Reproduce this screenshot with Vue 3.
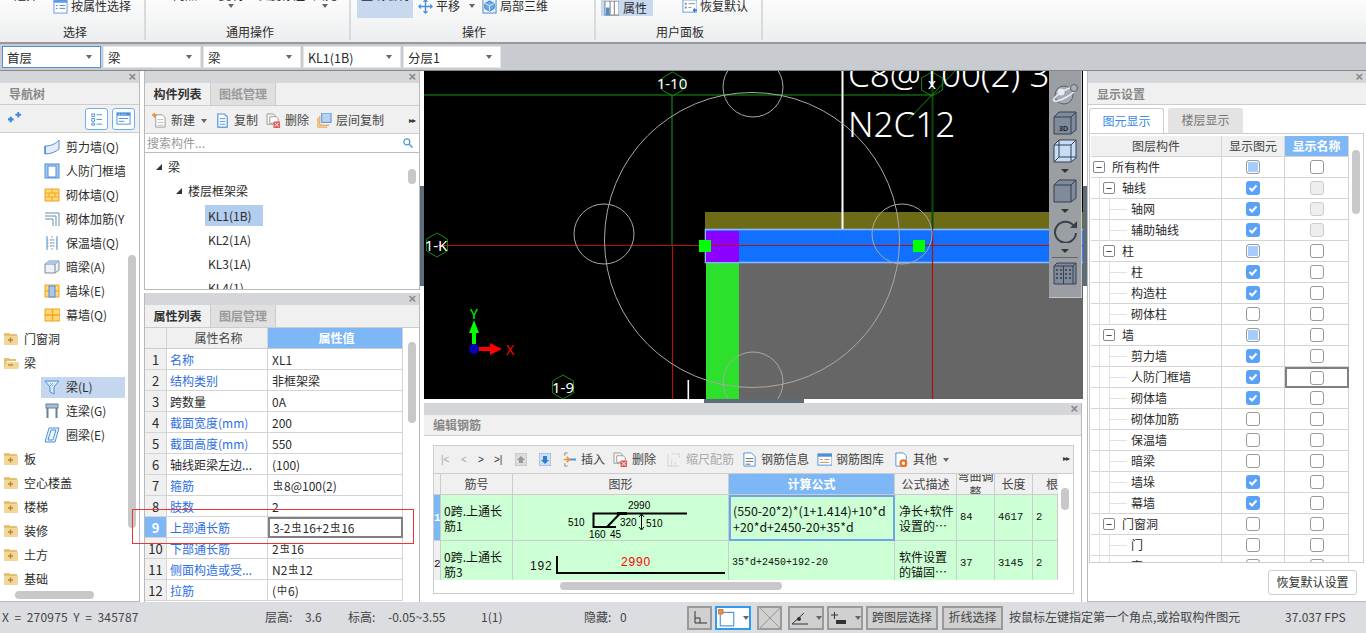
<script setup>
const ic = {
  attr: '<rect x="1" y="1" width="14" height="14" fill="#fff" stroke="#5b9bea"/><rect x="1" y="0" width="14" height="4" fill="#5b9bea"/><path d="M3 7h2M3 10h2M7 7h6M7 10h6" stroke="#5b80aa"/>',
  pan: '<path d="M8 1v14M1 8h14" stroke="#4a90d9" stroke-width="1.5"/><path d="M8 0l3 3H5zM8 16l3-3H5zM0 8l3-3v6zM16 8l-3-3v6z" fill="#4a90d9"/>',
  local: '<rect x="1" y="0" width="14" height="15" fill="#e6effa" stroke="#4a86c8"/><path d="M8 2l5 3v5l-5 3-5-3V5z" fill="#6aa7e8" stroke="#3d78b8"/><path d="M8 7v6M3 5l5 2 5-2" stroke="#d6e6f8" fill="none"/>',
  prop: '<rect x="1" y="0" width="15" height="15" fill="#fff" stroke="#777"/><rect x="2" y="7" width="4" height="8" fill="#4a90d9"/><path d="M6.5 0v15M11 0v15" stroke="#777"/>',
  reset: '<rect x="1" y="1" width="15" height="13" fill="#fff" stroke="#5b9bea"/><path d="M3 5h2M3 9h2" stroke="#888" stroke-width="2"/><path d="M7 5h7M7 9h3" stroke="#888"/><path d="M16 12h-4M12 12l2-2M12 12l2 2" stroke="#2a7ad8" fill="none" stroke-width="1.4"/>',
  stars: '<path d="M1 9h6M4 6v6" stroke="#3f86d8" stroke-width="2.4"/><path d="M9 4h6M12 1v6" stroke="#3f86d8" stroke-width="2"/>',
  listv: '<path d="M3 3h3v3H3zM3 8h3v3H3zM3 13h3v2H3z" fill="none" stroke="#4a90d9"/><path d="M8 4h6M8 9h6M8 14h6" stroke="#4a90d9"/>',
  win: '<rect x="1" y="2" width="14" height="12" fill="#fff" stroke="#4a90d9"/><rect x="1" y="2" width="14" height="3" fill="#4a90d9"/><path d="M3 8h10M3 11h6" stroke="#4a90d9"/><path d="M3 3.5h1M6 3.5h1M9 3.5h1" stroke="#fff"/>',
  shear: '<path d="M1 7C6 7 12 5 15 1v9c-3 3-9 5-14 5z" fill="#e6ecf5" stroke="#4a90d9"/><path d="M1 7v8" stroke="#4a90d9" stroke-width="1.5"/>',
  rf: '<rect x="1" y="1" width="14" height="14" fill="#a9c8ee" stroke="#4a90d9"/><rect x="4" y="3" width="8" height="11" fill="#fff" stroke="#4a90d9"/>',
  brick: '<rect x="1" y="2" width="14" height="12" fill="#ffd873" stroke="#f0a428"/><path d="M1 6h14M1 10h14M8 2v4M5 6v4M11 6v4M8 10v4" stroke="#f0a428"/>',
  mesh: '<path d="M1 2h14v13M1 5h11v10M1 8h8v7" fill="none" stroke="#6d8db0"/>',
  insul: '<path d="M3 1v14M13 1v14" stroke="#4a90d9"/><path d="M8 1v14M3 5h10M3 8h10M3 11h10" stroke="#6d8db0" stroke-dasharray="1.5 1.5"/>',
  dark: '<path d="M1 5l4-3h10v9l-4 3H1z" fill="#eef2f7" stroke="#7a8a9c"/><path d="M1 5h10v9M11 5l4-3" fill="none" stroke="#7a8a9c"/><path d="M5 2h10L11 5H1z" fill="#a9c8ee"/>',
  duo: '<rect x="1" y="2" width="14" height="12" fill="#ffd873" stroke="#f0a428"/><path d="M1 8h14" stroke="#f0a428"/><rect x="5" y="3" width="6" height="11" fill="#a9c8ee" stroke="#4a90d9"/>',
  curtain: '<rect x="1" y="2" width="15" height="12" fill="#ffd873" stroke="#f0a428"/><path d="M1 8h15M8.5 2v12" stroke="#f0a428" stroke-width="1.5"/>',
  plus: '<path d="M1 4V3a1 1 0 011-1h4l1 1h7v11H1z" fill="#e5c06f"/><path d="M1 5h14v9H1z" fill="#f3d699"/><path d="M5 9h5M7.5 6.5v5" stroke="#b08a2e" stroke-width="1.4"/>',
  minus: '<path d="M1 14V3h5l1 1h6v2H4z" fill="#e5c06f"/><path d="M3.5 7H18l-3 7H1z" fill="#f3d699"/><path d="M5 10h5" stroke="#b08a2e" stroke-width="1.4"/>',
  funnel: '<path d="M1 2h14l-5 6v7l-4-2V8z" fill="#dfeaf7" stroke="#4a90d9"/><path d="M6 4l3 3M9 4l-3 3" stroke="#4a90d9" stroke-width=".6"/>',
  lian: '<rect x="2" y="1" width="12" height="4" fill="#a7bcd6" stroke="#6a7f98"/><path d="M3.5 5v10M12.5 5v10" stroke="#6a7f98" stroke-width="2"/>',
  quan: '<path d="M5 1h10l-4 14H1z" fill="#eef4fb" stroke="#4a90d9"/><path d="M7 3h5l-3 10H4z" fill="none" stroke="#4a90d9"/>',
  add: '<path d="M4 2h7l3 3v10H4z" fill="#fff" stroke="#999"/><path d="M6 7h6M6 10h6M6 13h6" stroke="#bbb"/><path d="M0 2h5M2.5 0v5" stroke="#f08a24" stroke-width="1.6"/>',
  copy: '<path d="M3 1h7l3 3v11H3z" fill="#fff" stroke="#4a90d9" stroke-width="1.2"/><path d="M5 6h6M5 9h6M5 12h6" stroke="#4a90d9"/>',
  del: '<path d="M1 1h7l2 2v9H1z" fill="#f4f4f4" stroke="#999"/><path d="M4 4h7l2 2v5H4z" fill="#fff" stroke="#999"/><rect x="8" y="9" width="7" height="7" fill="#e45d5d"/><path d="M9.5 10.5l4 4M13.5 10.5l-4 4" stroke="#fff"/>',
  floor: '<rect x="5" y="0" width="10" height="10" fill="#b6d2f3" stroke="#4a90d9"/><path d="M3 3v10h10M1 5v10h10" fill="none" stroke="#f08a24"/>',
  search: '<circle cx="6.5" cy="6.5" r="4" fill="none" stroke="#4a9bd9" stroke-width="1.6"/><path d="M10 10l4 4" stroke="#4a9bd9" stroke-width="2"/>',
  up: '<rect x="0" y="0" width="12" height="13" fill="#dcdcdc" stroke="#bbb"/><path d="M6 3l4 4H8v3H4V7H2z" fill="#999"/>',
  down: '<rect x="0" y="0" width="12" height="13" fill="#cfe0f5" stroke="#8fa8c8"/><path d="M6 11L2 7h2V3h4v4h2z" fill="#2a7ad8"/>',
  ins: '<path d="M3 1h3M3 15h3M3 1v3M3 12v3" stroke="#888" fill="none"/><path d="M8 8h7" stroke="#4a90d9" stroke-width="2"/><path d="M8 8l-3-3M8 8l-3 3M2 8h6" stroke="#f08a24" stroke-width="1.4" fill="none"/>',
  scale: '<path d="M1 15V2M5 15V7M9 15v-5M1 15h12M5 2h8M13 2v4" stroke="#c4c4c4" stroke-dasharray="1.5 1" fill="none"/>',
  info: '<path d="M2 1h8l4 4v10H2z" fill="#fff" stroke="#4a90d9"/><path d="M4 7h8M4 10h8M4 13h5" stroke="#666"/>',
  lib: '<rect x="1" y="2" width="15" height="12" fill="#fff" stroke="#4a90d9"/><rect x="1" y="2" width="15" height="3" fill="#4a90d9"/><path d="M3 8h3M3 11h10M8 8h5" stroke="#c48a4a"/>',
  other: '<path d="M2 1h8l3 3v11H2z" fill="#fff" stroke="#4a90d9"/><circle cx="10" cy="12" r="3" fill="#fff" stroke="#f0701c" stroke-width="2.4"/>'
}
const navRows = [
  ['剪力墙(Q)', 'shear', 1], ['人防门框墙', 'rf', 1], ['砌体墙(Q)', 'brick', 1], ['砌体加筋(Y)', 'mesh', 1],
  ['保温墙(Q)', 'insul', 1], ['暗梁(A)', 'dark', 1], ['墙垛(E)', 'duo', 1], ['幕墙(Q)', 'curtain', 1],
  ['门窗洞', 'plus', 0], ['梁', 'minus', 0], ['梁(L)', 'funnel', 2], ['连梁(G)', 'lian', 1], ['圈梁(E)', 'quan', 1],
  ['板', 'plus', 0], ['空心楼盖', 'plus', 0], ['楼梯', 'plus', 0], ['装修', 'plus', 0], ['土方', 'plus', 0], ['基础', 'plus', 0]
]
const combos = ['首层', '梁', '梁', 'KL1(1B)', '分层1']
const listTools = [['add', '新建', true], ['copy', '复制'], ['del', '删除'], ['floor', '层间复制']]
const props = [
  ['名称', 'XL1', 1], ['结构类别', '非框架梁', 1], ['跨数量', '0A', 0], ['截面宽度(mm)', '200', 1], ['截面高度(mm)', '550', 1],
  ['轴线距梁左边...', '(100)', 0], ['箍筋', '虫8@100(2)', 1], ['肢数', '2', 1], ['上部通长筋', '3-2虫16+2虫16', 1],
  ['下部通长筋', '2虫16', 1], ['侧面构造或受...', 'N2虫12', 1], ['拉筋', '(中6)', 1]
]
const segs = s => s.split(/(虫|中)/).filter(Boolean)
const layers = [
  ['所有构件', 0, 'part', 'off'], ['轴线', 1, 'on', 'dis'], ['轴网', 2, 'on', 'dis'], ['辅助轴线', 2, 'on', 'dis'],
  ['柱', 1, 'part', 'off'], ['柱', 2, 'on', 'off'], ['构造柱', 2, 'on', 'off'], ['砌体柱', 2, 'off', 'off'],
  ['墙', 1, 'part', 'off'], ['剪力墙', 2, 'on', 'off'], ['人防门框墙', 2, 'on', 'off', true], ['砌体墙', 2, 'on', 'off'],
  ['砌体加筋', 2, 'off', 'off'], ['保温墙', 2, 'off', 'off'], ['暗梁', 2, 'off', 'off'], ['墙垛', 2, 'on', 'off'],
  ['幕墙', 2, 'on', 'off'], ['门窗洞', 1, 'off', 'off'], ['门', 2, 'off', 'off'], ['窗', 2, 'off', 'off']
]
const rebarTools = [
  ['ins', '插入', 'ti1'], ['del', '删除', 'ti2'], ['scale', '缩尺配筋', 'ti3 off'],
  ['info', '钢筋信息', 'ti4'], ['lib', '钢筋图库', 'ti5'], ['other', '其他', 'ti6']
]
const hex = '0,-12 10.4,-6 10.4,6 0,12 -10.4,6 -10.4,-6'
</script>

<template>
  <div class="app">
    <header class="ribbon">
      <section class="g g1">
        <div class="g-body">
          <div class="tall t11"><span>选择</span></div>
          <div class="ri"><svg class="i16" viewBox="0 0 16 16" v-html="ic.attr"></svg><span>按属性选择</span></div>
        </div>
        <div class="g-label">选择</div>
      </section>
      <section class="g g2">
        <div class="g-body">
          <div class="tall t21"><span>两点</span></div>
          <div class="tall t22"><span>复制</span><i class="arr"></i></div>
          <div class="tall t23"><span>长度标注</span></div>
          <div class="tall t24"><span>图元</span><i class="arr"></i></div>
        </div>
        <div class="g-label">通用操作</div>
      </section>
      <section class="g g3">
        <div class="g-body">
          <div class="act a1"><span>直线绘制</span></div>
          <div class="ri r-pan"><svg class="i16" viewBox="0 0 16 16" v-html="ic.pan"></svg><span>平移</span><i class="arr"></i></div>
          <div class="ri r-local"><svg class="i16" viewBox="0 0 16 16" v-html="ic.local"></svg><span>局部三维</span></div>
        </div>
        <div class="g-label">操作</div>
      </section>
      <section class="g g4">
        <div class="g-body">
          <div class="act a2"><svg class="i16" viewBox="0 0 16 16" v-html="ic.prop"></svg><span>属性</span></div>
          <div class="ri r-reset"><svg class="i16" viewBox="0 0 16 16" v-html="ic.reset"></svg><span>恢复默认</span></div>
        </div>
        <div class="g-label">用户面板</div>
      </section>
    </header>

    <div class="combos">
      <div v-for="(c, i) in combos" :key="i" class="combo" :class="{ focus: i === 0 }"><span>{{ c }}</span><i class="arr"></i></div>
    </div>

    <main class="main">
      <aside class="nav">
        <div class="title"><b>×</b></div>
        <div class="head">导航树</div>
        <div class="nav-tools">
          <svg class="i16 star" viewBox="0 0 16 16" v-html="ic.stars"></svg>
          <span class="tog t-a"><svg class="i16" viewBox="0 0 16 16" v-html="ic.listv"></svg></span>
          <span class="tog"><svg class="i16" viewBox="0 0 16 16" v-html="ic.win"></svg></span>
        </div>
        <ul class="nav-tree">
          <li v-for="r in navRows" :key="r[0]" class="nr" :class="['lv' + r[2]]">
            <svg class="i16" viewBox="0 0 16 16" v-html="ic[r[1]]"></svg><span>{{ r[0] }}</span>
          </li>
        </ul>
        <i class="thumb v-nav"></i><i class="thumb h-nav"></i>
      </aside>

      <div class="mid">
        <section class="panel p-list">
          <div class="title"><b>×</b></div>
          <div class="tabs"><span class="tab on">构件列表</span><span class="tab">图纸管理</span></div>
          <div class="tools">
            <span v-for="t in listTools" :key="t[1]" class="tool">
              <svg class="i16" viewBox="0 0 16 16" v-html="ic[t[0]]"></svg><em>{{ t[1] }}</em><i v-if="t[2]" class="arr"></i>
            </span>
            <span class="more">▸▸</span>
          </div>
          <div class="search"><span>搜索构件...</span><svg class="i16" viewBox="0 0 16 16" v-html="ic.search"></svg></div>
          <div class="list-tree">
            <div class="lt l0"><i class="tri"></i>梁</div>
            <div class="lt l1"><i class="tri"></i>楼层框架梁</div>
            <div class="lt l2"><span class="sel">KL1(1B)</span></div>
            <div class="lt l2"><span>KL2(1A)</span></div>
            <div class="lt l2"><span>KL3(1A)</span></div>
            <div class="lt l2"><span>KL4(1)</span></div>
          </div>
          <i class="thumb v-list"></i>
        </section>
        <section class="panel p-prop">
          <div class="title"><b>×</b></div>
          <div class="tabs"><span class="tab on">属性列表</span><span class="tab">图层管理</span></div>
          <div class="prow phead"><span></span><span>属性名称</span><span class="blue">属性值</span></div>
          <div v-for="(p, i) in props" :key="i" class="prow" :class="{ cur: i === 8 }">
            <span class="idx">{{ i + 1 }}</span>
            <span class="pn" :class="{ link: p[2] }">{{ p[0] }}</span>
            <span class="pv"><template v-for="(s, k) in segs(p[1])" :key="k"><sup v-if="s === '虫' || s === '中'">{{ s }}</sup><template v-else>{{ s }}</template></template></span>
          </div>
          <i class="thumb v-prop"></i>
        </section>
      </div>

      <div class="center">
        <div class="canvas">
          <svg class="cad" viewBox="424 71 659 328" width="659" height="328">
            <rect x="424" y="71" width="659" height="328" fill="#000"/>
            <rect x="705" y="212" width="378" height="17" fill="#6e6b17"/>
            <rect x="739" y="263" width="344" height="136" fill="#666"/>
            <rect x="706" y="263" width="33" height="136" fill="#2ce02c"/>
            <rect x="705.5" y="229.5" width="378" height="33" fill="#1270ff" stroke="#8ab8ff" stroke-width="1.6"/>
            <rect x="706" y="231" width="33" height="31" fill="#8c00ff"/>
            <path d="M424 95H932M672 95V245M932.5 71V229" stroke="#0a4d0a" fill="none" stroke-width="2"/>
            <path d="M437 245.5H1083M672.5 245V399M932.5 229V399" stroke="#b01212" fill="none" stroke-width="1.2"/>
            <path d="M955 71L932 95L908 120" stroke="#138a13" fill="none"/>
            <rect x="841.5" y="71" width="2" height="158" fill="#fff"/>
            <rect x="687.5" y="380" width="1.6" height="19" fill="#fff"/>
            <g fill="none" stroke="#a8a8a8" stroke-width="1">
              <circle cx="752" cy="240" r="147.5"/><circle cx="753" cy="87" r="30"/><circle cx="604" cy="234" r="30"/>
              <circle cx="902" cy="234" r="30"/><circle cx="753" cy="382" r="30"/>
            </g>
            <g fill="none" stroke="#138a13">
              <polygon :points="hex" transform="translate(672.5 84)"/><polygon :points="hex" transform="translate(437 245)"/>
              <polygon :points="hex" transform="translate(563 387)"/><polygon :points="hex" transform="translate(932 84)"/>
            </g>
            <rect x="699" y="240" width="12" height="12" fill="#0f0"/><rect x="913" y="240" width="12" height="12" fill="#0f0"/>
            <g class="cad-lb" fill="#fff" text-anchor="middle">
              <text x="672" y="89">1-10</text><text x="436" y="251">1-K</text><text x="563" y="393">1-9</text><text x="932" y="89">x</text>
            </g>
            <text class="cad-big" x="848" y="87" fill="#fff">C8@100(2) 3</text>
            <text class="cad-big" x="848" y="137" fill="#fff">N2C12</text>
            <path d="M474 344V332" stroke="#0f0" stroke-width="4"/><path d="M474 320l5 13h-10z" fill="#0f0"/>
            <path d="M478 349H492" stroke="#f00" stroke-width="4"/><path d="M502 349l-12-6v12z" fill="#f00"/>
            <circle cx="474" cy="349" r="5" fill="#0000b4"/>
            <text class="cad-ax" x="474" y="319" fill="#0f0" text-anchor="middle">Y</text>
            <text class="cad-ax" x="510" y="355" fill="#f00" text-anchor="middle">X</text>
          </svg>
          <div class="float">
            <svg viewBox="0 0 26 26" width="26" height="26"><circle cx="12" cy="14" r="9" fill="#a4abb6" stroke="#59626e"/><circle cx="9" cy="11" r="3.5" fill="#e8ebef"/><ellipse cx="13" cy="13" rx="13" ry="3.5" transform="rotate(-30 13 13)" fill="none" stroke="#e8eaee" stroke-width="1.6"/><circle cx="22" cy="7" r="3.5" fill="#aab1bb" stroke="#59626e"/></svg>
            <svg viewBox="0 0 24 24" width="24" height="24"><path d="M1 6l5-5h17v18l-5 4H1z" fill="#7f8b9b" stroke="#37414d"/><path d="M1 6h17v17M18 6l5-5" fill="none" stroke="#37414d"/><text x="6" y="20" class="f3d" fill="#222">3D</text></svg>
            <svg viewBox="0 0 24 24" width="24" height="24"><path d="M1 6l5-5h17v18l-5 4H1z" fill="#c5ddf6" stroke="#37414d"/><path d="M1 6h17v17M18 6l5-5M6 1v17H23M6 18l-5 5" fill="none" stroke="#37414d"/></svg>
            <i class="arr dk"></i>
            <svg viewBox="0 0 24 24" width="24" height="24"><path d="M1 6l5-5h17v18l-5 4H1z" fill="#7f8b9b" stroke="#37414d"/><path d="M1 6h17v17M18 6l5-5" fill="none" stroke="#37414d"/></svg>
            <i class="arr dk"></i>
            <svg viewBox="0 0 24 24" width="24" height="24"><path d="M21 7A10.5 10.5 0 1 0 23 14" fill="none" stroke="#37414d" stroke-width="2"/><path d="M17 9h7V2z" fill="#37414d"/></svg>
            <i class="arr dk"></i>
            <i class="sp"></i>
            <svg viewBox="0 0 24 24" width="24" height="24"><path d="M1 4l3-3h19v21H1z" fill="#7f8b9b" stroke="#37414d"/><path d="M1 4h19v18M20 4l3-3M10.5 4v18" fill="none" stroke="#37414d"/><path d="M3 8h2M3 12h2M3 16h2M7 8h2M7 12h2M7 16h2M12 8h2M12 12h2M12 16h2M16 8h2M16 12h2M16 16h2" stroke="#111"/></svg>
          </div>
        </div>
        <section class="rebar">
          <div class="title"><b>×</b></div>
          <div class="head h21">编辑钢筋</div>
          <div class="rb-box">
            <div class="rb-tools">
              <span class="pg p1 off">|&lt;</span><span class="pg p2 off">&lt;</span><span class="pg p3">&gt;</span><span class="pg p4">&gt;|</span>
              <svg class="ud u1" viewBox="0 0 12 13" v-html="ic.up"></svg><svg class="ud u2" viewBox="0 0 12 13" v-html="ic.down"></svg>
              <span v-for="t in rebarTools" :key="t[1]" class="tool" :class="t[2]">
                <svg class="i16" viewBox="0 0 16 16" v-html="ic[t[0]]"></svg><em>{{ t[1] }}</em><i v-if="t[1] === '其他'" class="arr"></i>
              </span>
              <span class="more">▸▸</span>
            </div>
            <div class="rrow rhead">
              <span></span><span>筋号</span><span>图形</span><span class="blue">计算公式</span><span>公式描述</span><span class="wrap2">弯曲调整</span><span>长度</span><span class="clip1">根数</span>
            </div>
            <div class="rb-body">
              <div class="rrow rd r1">
                <span class="ridx act-idx">1</span><span class="rn">0跨.上通长筋1</span>
                <span class="shape">
                  <svg viewBox="513 495 216 46" width="216" height="46">
                    <path d="M687 513.5H593.5V527H616M620 513.5L607 527" fill="none" stroke="#000" stroke-width="2"/><path d="M617 512h10v3h-10z"/>
                    <path d="M641.5 514V530M639 517l2.5-3 2.5 3M639 527l2.5 3 2.5-3" fill="none" stroke="#000"/>
                    <g class="sm"><text x="628" y="509">2990</text><text x="568" y="526">510</text><text x="620" y="526">320</text><text x="646" y="527">510</text><text x="589" y="538">160</text><text x="610" y="538">45</text></g>
                  </svg>
                </span>
                <span class="fm fsel">(550-20*2)*(1+1.414)+10*d<br>+20*d+2450-20+35*d</span>
                <span class="rn ds">净长+软件设置的⋯</span><span class="mono">84</span><span class="mono">4617</span><span class="mono">2</span>
              </div>
              <div class="rrow rd r2">
                <span class="ridx">2</span><span class="rn">0跨.上通长筋3</span>
                <span class="shape">
                  <svg viewBox="513 541 216 38" width="216" height="38">
                    <path d="M557 556V573H725" fill="none" stroke="#000" stroke-width="2"/>
                    <text class="md" x="530" y="570" fill="#111">192</text><text class="md" x="621" y="566" fill="#f00">2990</text>
                  </svg>
                </span>
                <span class="fm mono fs2">35*d+2450+192-20</span>
                <span class="rn ds">软件设置的锚固⋯</span><span class="mono">37</span><span class="mono">3145</span><span class="mono">2</span>
              </div>
            </div>
            <i class="thumb h-rb"></i><i class="thumb v-rb"></i>
          </div>
        </section>
      </div>

      <aside class="right">
        <div class="title"><b>×</b></div>
        <div class="head">显示设置</div>
        <div class="rtabs"><span class="rtab on">图元显示</span><span class="rtab">楼层显示</span></div>
        <div class="rt-box">
          <div class="lrow lhead"><span>图层构件</span><span>显示图元</span><span class="blue">显示名称</span></div>
          <div v-for="(l, i) in layers" :key="i" class="lrow">
            <span class="lname" :class="'d' + l[1]">
              <i v-if="l[1] > 0" class="vl v0"></i><i v-if="l[1] === 2" class="vl v1"></i><i v-if="l[1] === 2" class="hl"></i>
              <i v-if="l[1] < 2" class="box">−</i>{{ l[0] }}
            </span>
            <span class="cbc"><i class="cb" :class="l[2]"><svg v-if="l[2] === 'on'" viewBox="0 0 14 14" width="14" height="14"><path d="M3.5 7l2.5 2.5 4.5-5" fill="none" stroke="#fff" stroke-width="2"/></svg></i></span>
            <span class="cbc" :class="{ cellsel: l[4] }"><i class="cb" :class="l[3]"></i></span>
          </div>
          <i class="thumb v-rt"></i>
        </div>
        <div class="rbtn"><button type="button">恢复默认设置</button></div>
      </aside>

      <i class="strip s1"></i><i class="strip s2"></i><i class="strip s3"></i>
      <div class="redbox"></div>
    </main>

    <footer class="status">
      <span class="coord">X = 270975 Y = 345787</span><span>层高:</span><span>3.6</span><span>标高:</span><span>-0.05~3.55</span><span>1(1)</span><span>隐藏:</span><span>0</span>
      <button class="sb b-ang" type="button"><svg viewBox="0 0 16 16" width="16" height="16"><path d="M3 1v12h12M3 8h5v5" fill="none" stroke="#333"/></svg></button>
      <button class="sb b-sel" type="button"><svg viewBox="0 0 16 16" width="18" height="18"><rect x="2" y="3" width="12" height="12" fill="none" stroke="#4a90d9"/><rect x="0" y="0" width="4.5" height="4.5" fill="#f08a3c" stroke="#c86a20" stroke-width=".5"/></svg><i class="arr"></i></button>
      <button class="sb b-x" type="button"><svg viewBox="0 0 24 24" width="24" height="24"><path d="M2 2l20 20M22 2L2 22" stroke="#999"/></svg></button>
      <button class="sb b-w" type="button"><svg viewBox="0 0 18 14" width="18" height="14"><path d="M1 13h16M1 13L13 2" stroke="#333" fill="none"/><circle cx="8" cy="8" r="2" fill="#333"/></svg><i class="arr"></i></button>
      <button class="sb b-w" type="button"><svg viewBox="0 0 18 14" width="18" height="14"><path d="M1 4h7M4.5 1v7" stroke="#333"/><rect x="6" y="9" width="10" height="4" fill="#333"/></svg><i class="arr"></i></button>
      <button class="sb b-t" type="button">跨图层选择</button>
      <button class="sb b-t" type="button">折线选择</button>
      <span>按鼠标左键指定第一个角点,或拾取构件图元</span><span>37.037 FPS</span>
    </footer>
  </div>
</template>

<style scoped>
.app { width: 1366px; height: 633px; overflow: hidden; display: flex; flex-direction: column; background: #fff; color: #2b2b2b; font: 12px/1.2 "Noto Sans CJK SC", "Noto Sans", sans-serif; }
i { font-style: normal; display: block; }
em { font-style: normal; }
svg { display: block; flex: none; overflow: hidden; }
.i16 { width: 15px; height: 15px; }
.arr { width: 0; height: 0; border: 3px solid transparent; border-top: 4px solid #666; border-bottom: 0; flex: none; }
.arr.dk { border-top-color: #333; border-left-width: 4px; border-right-width: 4px; }
.thumb { position: absolute; background: #c8c8c8; border-radius: 4px; }
.blue { background: #7db7f5 !important; color: #fff; font-weight: 700; }

.ribbon { height: 44px; flex: none; display: flex; box-sizing: border-box; border-bottom: 2px solid #999; background: linear-gradient(#fbfbfb, #eceeef); overflow: hidden; }
.g { flex: none; box-sizing: border-box; height: 40px; border-right: 2px solid #d9dadb; }
.g1 { width: 146px; } .g2 { width: 205px; } .g3 { width: 245px; } .g4 { width: 167px; }
.g-body { height: 24px; display: flex; align-items: flex-start; white-space: nowrap; }
.g-label { height: 16px; line-height: 16px; text-align: center; }
.g1 .g-label { width: 150px; }
.g2 .g-label { width: 208px; }
.g3 .g-label { width: 246px; }
.g4 .g-label { width: 168px; }
.tall { margin-top: -12px; display: flex; flex-direction: column; align-items: center; gap: 3px; line-height: 13px; }
.t11 { margin-left: 14px; } .t21 { margin-left: 27px; } .t22 { margin-left: 22px; } .t23 { margin-left: 14px; } .t24 { margin-left: 8px; }
.tall span { height: 13px; }
.ri { display: flex; align-items: center; height: 12px; line-height: 12px; gap: 3px; }
.g1 .ri { margin-left: 15px; }
.act { background: #c7d8ef; display: flex; align-items: center; }
.a1 { margin-left: 6px; width: 56px; height: 18px; justify-content: center; }
.a1 span { transform: translateY(-14px); }
.a2 { margin-left: 5px; width: 52px; height: 16px; gap: 4px; padding-left: 3px; box-sizing: border-box; }
.r-pan { margin-left: 5px; } .r-pan .arr { margin-left: 6px; }
.r-local { margin-left: 7px; }
.r-reset { margin-left: 29px; }

.combos { height: 27px; flex: none; box-sizing: border-box; display: flex; gap: 2px; padding: 2px 0 0 2px; background: #c8ccd1; border-bottom: 1px solid #888; }
.combo { box-sizing: border-box; width: 99px; height: 22px; display: flex; align-items: center; justify-content: space-between; background: #fff; padding: 0 8px 0 4px; border: 1px solid #e4e6e8; font-size: 12.5px; }
.combo.focus { border-color: #4d90e0; }
.combo + .combo { width: 98px; }

.main { flex: 1; min-height: 0; position: relative; display: flex; background: #fff; }
.title { height: 12px; background: #d5d6da; position: relative; }
.title b { position: absolute; right: 3px; top: -2px; font: 700 13px/16px "Liberation Sans", sans-serif; color: #888; }
.head { height: 22px; line-height: 22px; box-sizing: border-box; background: #f0f0f0; border-bottom: 1px solid #ccc; color: #888; font-weight: 700; padding-left: 9px; }
.head.h21 { height: 21px; line-height: 20px; }

.nav { width: 140px; flex: none; box-sizing: border-box; border-right: 1px solid #b9b9b9; border-bottom: 1px solid #b9b9b9; position: relative; overflow: hidden; }
.nav-tools { height: 28px; box-sizing: border-box; display: flex; align-items: center; background: #f0f0f0; border-bottom: 1px solid #ccc; padding-left: 7px; }
.star { margin-right: 63px; }
.tog { box-sizing: border-box; width: 24px; height: 22px; border: 1px solid #6fb0f5; border-radius: 3px; display: flex; align-items: center; justify-content: center; background: #fff; margin-right: 4px; }
.nav-tree { list-style: none; margin: 2px 0 0; padding: 0; width: 125px; overflow: hidden; }
.nr { height: 24px; display: flex; align-items: center; gap: 6px; white-space: nowrap; position: relative; }
.nr .i16 { width: 16px; height: 16px; }
.lv0 { padding-left: 3px; gap: 5px; }
.lv1 { padding-left: 44px; }
.lv2 { padding-left: 44px; }
.lv2::before { content: ""; position: absolute; left: 41px; right: 0; top: 2px; bottom: 1px; background: #c5d7ef; z-index: 0; }
.nr > * { position: relative; z-index: 1; }
.v-nav { left: 128px; top: 184px; width: 8px; height: 273px; }
.h-nav { left: 15px; top: 520px; width: 79px; height: 8px; }

.mid { width: 276px; margin-left: 4px; flex: none; display: flex; flex-direction: column; gap: 3px; position: relative; }
.panel { box-sizing: border-box; border: 1px solid #b9b9b9; border-top: 0; position: relative; overflow: hidden; }
.p-list { height: 219px; }
.p-prop { height: 309px; border-bottom: 0; }
.tabs { height: 23px; box-sizing: border-box; display: flex; background: #f0f0f0; border-bottom: 1px solid #ccc; }
.tab { width: 64px; text-align: center; line-height: 22px; background: #e0e0e0; color: #999; font-weight: 700; border-right: 1px solid #ccc; height: 22px; }
.tab.on { background: #f0f0f0; color: #333; width: 65px; }
.tools { height: 28px; box-sizing: border-box; background: #f0f0f0; display: flex; align-items: center; border-bottom: 1px solid #ccc; padding: 2px 0 0 7px; gap: 8px; position: relative; }
.tool { display: flex; align-items: center; gap: 4px; white-space: nowrap; color: #444; }
.tool .arr { margin-left: 2px; }
.more { position: absolute; right: 4px; font: 8px/10px "DejaVu Sans", sans-serif; letter-spacing: -1px; color: #333; }
.search { height: 19px; box-sizing: border-box; display: flex; align-items: center; justify-content: space-between; padding: 0 5px 0 2px; border-bottom: 1px solid #bbb; color: #999; }
.search svg { width: 12px; height: 12px; }
.list-tree { padding-top: 2px; }
.lt { height: 24px; display: flex; align-items: center; position: relative; }
.l0 { padding-left: 23px; } .l1 { padding-left: 43px; } .l2 { padding-left: 60px; }
.tri { position: absolute; width: 0; height: 0; border-left: 6px solid transparent; border-bottom: 6px solid #333; top: 9px; }
.l0 .tri { left: 11px; } .l1 .tri { left: 31px; }
.l2 span { display: block; width: 58px; padding-left: 3px; line-height: 21px; box-sizing: border-box; }
.sel { background: #b3cdee; }
.v-list { left: 263px; top: 98px; width: 8px; height: 15px; }

.prow { display: grid; grid-template-columns: 22px 101px 135px; height: 21px; line-height: 22px; box-sizing: border-box; }
.prow > span { box-sizing: border-box; border-right: 1px solid #d4d4d4; border-bottom: 1px solid #d4d4d4; white-space: nowrap; overflow: hidden; padding-left: 3px; }
.phead { line-height: 20px; }
.phead > span { background: #f0f0f0; text-align: center; border-bottom-color: #ccc; color: #444; }
.phead > .blue { color: #fff; }
.idx { background: #f0f0f0; text-align: center; padding-left: 0 !important; font-size: 13px; }
.link { color: #2f6fe0; }
.pv { padding-left: 4px !important; }
.pv sup { font-size: 10px; line-height: 0; vertical-align: 2px; margin: 0 1px; }
.cur .idx { background: #7db7f5; color: #fff; font-weight: 700; }
.cur .pv { border: 2px solid #808080 !important; line-height: 18px; padding-left: 3px !important; }
.v-prop { left: 263px; top: 49px; width: 8px; height: 81px; }
.redbox { position: absolute; z-index: 5; left: 132px; top: 438px; width: 282px; height: 35px; border: 1px solid #ee3333; box-sizing: border-box; pointer-events: none; }

.center { width: 659px; margin-left: 4px; flex: none; display: flex; flex-direction: column; }
.canvas { height: 328px; position: relative; overflow: hidden; flex: none; }
.cad-lb { font: 15px "Noto Sans", sans-serif; }
.cad-big { font: 300 35px "Noto Sans", sans-serif; }
.cad-ax { font: 14px "Noto Sans", sans-serif; }
.f3d { font: 700 7px "Liberation Sans", sans-serif; }
.float { position: absolute; left: 625px; top: -1px; width: 33px; height: 228px; box-sizing: border-box; background: #9b9ea3; border-right: 1px solid #c4c6c8; border-bottom: 1px solid #c4c6c8; display: flex; flex-direction: column; align-items: center; padding-top: 11px; gap: 4px; }
.float .arr { margin: 2px 0; }
.float .sp { width: 26px; height: 1px; background: #666; margin-top: -2px; }
.rebar { margin-top: 4px; height: 199px; flex: none; box-sizing: border-box; width: 658px; border-right: 1px solid #b9b9b9; position: relative; overflow: hidden; }
.rb-box { position: absolute; left: 9px; top: 42px; width: 641px; height: 149px; box-sizing: border-box; border: 1px solid #ccc; }
.rb-tools { height: 28px; box-sizing: border-box; background: #f0f0f0; border-bottom: 1px solid #ccc; position: relative; }
.pg { position: absolute; top: 7px; color: #333; font: 10px/14px "Liberation Sans", sans-serif; }
.pg.off { color: #aaa; }
.p1 { left: 7px; } .p2 { left: 27px; } .p3 { left: 44px; } .p4 { left: 60px; }
.ud { position: absolute; top: 7px; width: 12px; height: 13px; }
.u1 { left: 81px; } .u2 { left: 105px; }
.rb-tools .tool { position: absolute; top: 6px; }
.rb-tools .off { color: #aaa; }
.ti1 { left: 128px; } .ti2 { left: 179px; } .ti3 { left: 233px; } .ti4 { left: 308px; } .ti5 { left: 383px; } .ti6 { left: 460px; }
.rb-tools .more { top: 8px; }
.rrow { display: grid; grid-template-columns: 7px 72px 216px 166px 62px 38px 38px 25px; width: 624px; box-sizing: border-box; }
.rrow > span { box-sizing: border-box; border-right: 1px solid #ccc; border-bottom: 1px solid #ccc; overflow: hidden; }
.rhead { height: 21px; line-height: 20px; text-align: center; background: #f0f0f0; color: #444; }
.wrap2 { white-space: normal; line-height: 16px; display: flex; align-items: center; justify-content: center; height: 21px; }
.clip1 { white-space: nowrap; text-align: left; padding-left: 13px; border-right: 0 !important; }
.rb-body { height: 85px; overflow: hidden; }
.rd { background: #ccffd3; color: #111; }
.r1 { height: 46px; } .r2 { height: 46px; }
.rn { padding: 3px 0 0 3px; line-height: 15px; }
.r1 .rn, .r2 .rn { padding-top: 8px; }
.ds { padding-left: 4px; }
.ridx { background: #f0f0f0; text-align: center; font: 11px/46px "Liberation Mono", monospace; padding: 0; }
.act-idx { background: #7db7f5; color: #fff; font-weight: 700; }
.shape svg { width: 216px; }
.sm { font: 10px "Liberation Sans", sans-serif; }
.md { font: 12px "Liberation Sans", sans-serif; letter-spacing: .8px; }
.fm { white-space: nowrap; padding: 7px 0 0 3px; line-height: 16px; font-size: 12.4px; }
.fsel { border: 2px solid #6ea5e6 !important; padding: 6px 0 0 2px; }
.mono { font: 10.5px/44px "Liberation Mono", monospace; padding-left: 3px; letter-spacing: 0; }
.fs2 { line-height: 44px; padding: 0 0 0 3px; font-size: 10px; }
.h-rb { left: 126px; top: 136px; width: 222px; height: 8px; }
.v-rb { left: 627px; top: 42px; width: 8px; height: 22px; }

.right { width: 279px; margin-left: 4px; flex: none; box-sizing: border-box; border-left: 1px solid #b9b9b9; border-bottom: 1px solid #b9b9b9; position: relative; overflow: hidden; }
.rtabs { height: 28px; display: flex; align-items: flex-end; gap: 4px; padding-left: 1px; }
.rtab { box-sizing: border-box; width: 75px; height: 25px; line-height: 24px; text-align: center; background: #e3e3e3; color: #777; border-radius: 3px 3px 0 0; }
.rtab.on { background: #fff; color: #3a8be8; border: 1px solid #ccc; border-bottom: 0; }
.rt-box { position: relative; box-sizing: border-box; margin-left: 1px; width: 275px; height: 430px; padding: 2px 0 0 1px; border: 1px solid #ccc; overflow: hidden; }
.lrow { display: grid; grid-template-columns: 131px 63px 64px; height: 21px; box-sizing: border-box; }
.lrow > span { box-sizing: border-box; border-right: 1px solid #d4d4d4; border-bottom: 1px solid #d4d4d4; }
.lhead { line-height: 20px; text-align: center; }
.lhead > span { background: #f0f0f0; color: #444; }
.lhead > .blue { color: #fff; }
.lname { position: relative; display: flex; align-items: center; line-height: 20px; white-space: nowrap; }
.d0 { padding-left: 2px; } .d1 { padding-left: 12px; } .d2 { padding-left: 40px; }
.box { position: relative; width: 12px; height: 12px; box-sizing: border-box; border: 1px solid #888; border-radius: 2px; text-align: center; font: 11px/10px "Liberation Sans", sans-serif; margin-right: 7px; background: #fff; z-index: 1; flex: none; }
.vl { position: absolute; width: 1px; top: 0; bottom: -1px; background: #e2e2e2; }
.v0 { left: 8px; } .v1 { left: 18px; }
.hl { position: absolute; left: 18px; width: 18px; height: 1px; top: 10px; background: #e2e2e2; }
.cbc { display: flex; align-items: center; justify-content: center; }
.cellsel { border: 2px solid #808080 !important; }
.cb { box-sizing: border-box; width: 14px; height: 14px; border-radius: 3px; }
.cb.off { border: 1px solid #999; background: #fff; }
.cb.dis { border: 1px solid #ccc; background: #eee; }
.cb.on { background: #5aa2f8; }
.cb.part { border: 1px solid #999; background: #a5ccfa; box-shadow: inset 0 0 0 1px #fff; }
.v-rt { left: 262px; top: 16px; width: 8px; height: 64px; }
.rbtn { display: flex; justify-content: flex-end; padding: 7px 9px 0 0; }
.rbtn button { width: 89px; height: 25px; padding: 0; background: #fff; border: 1px solid #ccc; border-radius: 3px; font: inherit; color: #333; }

.strip { position: absolute; background: #5e6c77; }
.s1 { left: 420px; top: 115px; width: 4px; height: 100px; }
.s2 { left: 1083px; top: 115px; width: 4px; height: 100px; }
.s3 { left: 704px; top: 328px; width: 100px; height: 4px; }

.status { height: 31px; flex: none; box-sizing: border-box; background: #dcdde0; display: grid; grid-template-columns: 263px 40px 43px 40px 93px 103px 36px 67px 28px 42px 31px 39px 39px 76px 67px 276px auto; align-items: center; padding-left: 2px; white-space: nowrap; color: #444; }
.coord { word-spacing: 2.5px; letter-spacing: .2px; }
.sb { box-sizing: border-box; height: 24px; padding: 0; background: #d0d0d0; border: 2px solid #9a9a9a; font: inherit; color: #444; display: flex; align-items: center; justify-content: center; gap: 7px; }
.b-ang { width: 25px; } .b-sel { width: 36px; background: #fff; border-color: #2d9cf0; } .b-x { width: 25px; overflow: hidden; } .b-w { width: 36px; } .b-t { width: 72px; }
.b-t + .b-t { width: 61px; }
</style>
